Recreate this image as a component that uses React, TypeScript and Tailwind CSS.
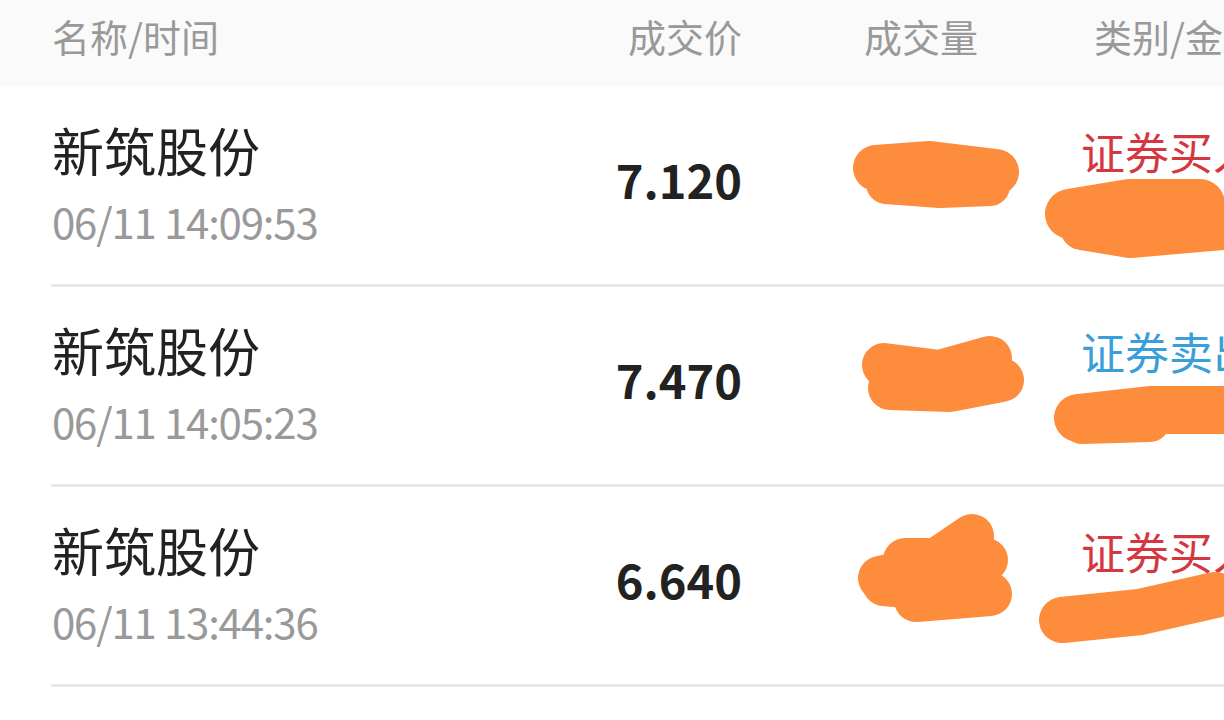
const rows = [
  { name: '新筑股份', time: '06/11 14:09:53', price: '7.120', type: '证券买入', buy: true },
  { name: '新筑股份', time: '06/11 14:05:23', price: '7.470', type: '证券卖出', buy: false },
  { name: '新筑股份', time: '06/11 13:44:36', price: '6.640', type: '证券买入', buy: true },
];

const font = { fontFamily: '"Noto Sans CJK SC", "Noto Sans", sans-serif' };

function Scribbles() {
  return (
    <svg
      className="pointer-events-none absolute left-0 top-0"
      width="1224"
      height="720"
      viewBox="0 0 1224 720"
    >
      <g stroke="#fd8c3c" fill="none" strokeLinecap="round" strokeLinejoin="round">
        {/* row 1 */}
        <path d="M876 168 L930 164 L996 172" strokeWidth="46" />
        <path d="M886 184 L940 188 L990 186" strokeWidth="40" />
        <path d="M1070 214 L1130 204 L1200 204" strokeWidth="50" />
        <path d="M1082 228 L1130 236 L1224 228" strokeWidth="44" />
        {/* row 2 */}
        <path d="M884 365 L940 372 L990 358" strokeWidth="44" />
        <path d="M890 388 L950 390 L1002 380" strokeWidth="44" />
        <path d="M1078 418 L1150 410 L1224 410" strokeWidth="48" />
        <path d="M1082 424 L1150 422" strokeWidth="40" />
        {/* row 3 */}
        <path d="M880 578 L925 568 L972 536" strokeWidth="44" />
        <path d="M905 560 L986 560" strokeWidth="44" />
        <path d="M916 600 L990 594" strokeWidth="44" />
        <path d="M884 584 L950 590" strokeWidth="44" />
        <path d="M1062 620 L1140 612 L1215 595" strokeWidth="46" />
      </g>
    </svg>
  );
}

export default function App() {
  return (
    <div className="relative h-[720px] w-[1224px] overflow-hidden bg-white" style={font}>
      <div className="flex h-[87px] items-start whitespace-nowrap bg-[#fafafa] pt-[11px] text-[38px] leading-[50px] text-[#999999]">
        <div className="w-[574px] shrink-0 pl-[52px]">名称/时间</div>
        <div className="w-[168px] shrink-0 text-right">成交价</div>
        <div className="w-[236px] shrink-0 text-right">成交量</div>
        <div className="shrink-0 pl-[116px]">类别/金额</div>
      </div>
      {rows.map((r, i) => (
        <div key={i} className="flex h-[200px] flex-col">
          <div className="flex flex-1 items-center whitespace-nowrap pb-[6px]">
            <div className="w-[574px] shrink-0 pl-[52px]">
              <div className="text-[52px] leading-[60px] text-[#222222]">{r.name}</div>
              <div className="mt-[16px] text-[42px] leading-[50px] tracking-[-1.2px] text-[#999999]">
                {r.time}
              </div>
            </div>
            <div className="mb-[7px] w-[168px] shrink-0 text-right text-[47px] font-bold leading-[60px] text-[#222222]">
              {r.price}
            </div>
            <div className="w-[236px] shrink-0" />
            <div className="shrink-0 pl-[103px]">
              <div
                className={
                  r.buy
                    ? 'text-[44px] leading-[54px] text-[#d4373f]'
                    : 'text-[44px] leading-[54px] text-[#3a9fd8]'
                }
              >
                {r.type}
              </div>
              <div className="h-[64px]" />
            </div>
          </div>
          <div className="ml-[51px] h-[3px] bg-[#e8e8e8]" />
        </div>
      ))}
      <Scribbles />
    </div>
  );
}
